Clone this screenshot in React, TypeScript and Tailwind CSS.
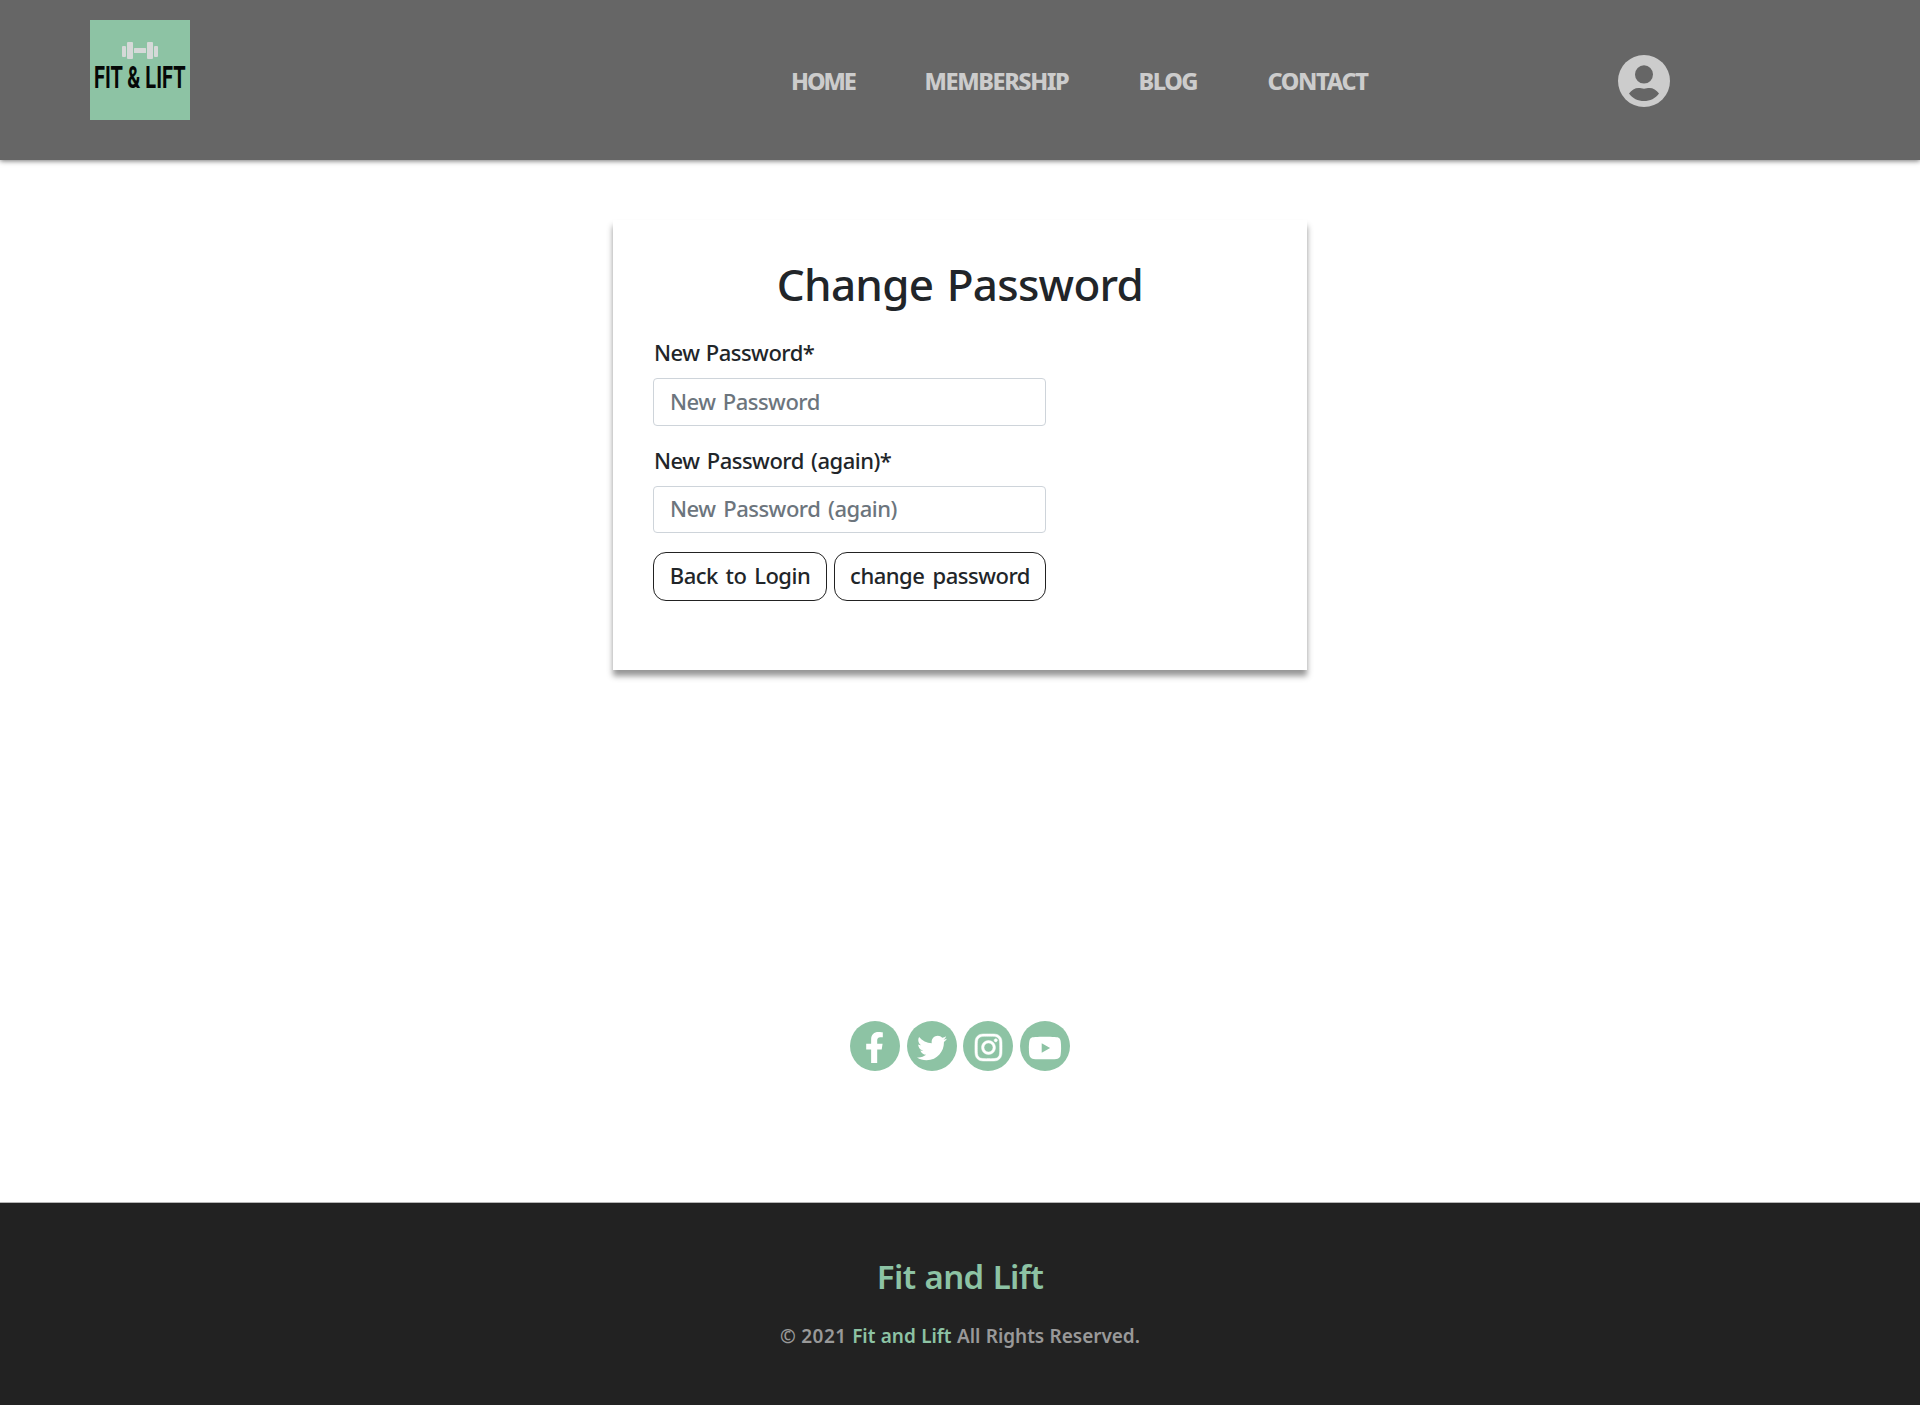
import React from "react";
import { FaFacebookF, FaTwitter, FaInstagram, FaYoutube } from "react-icons/fa";

function Logo() {
  return (
    <svg className="block h-[100px] w-[100px] overflow-visible bg-[#8dc3a4]" viewBox="0 0 100 100" role="img" aria-label="Fit & Lift">
      <g fill="#d6d9d8">
        <rect x="32" y="26" width="4" height="11" rx="1" />
        <rect x="37" y="22" width="6" height="17" rx="1" />
        <rect x="44" y="28" width="12" height="5" rx="0.5" />
        <rect x="57" y="22" width="6" height="17" rx="1" />
        <rect x="64" y="26" width="4" height="11" rx="1" />
      </g>
      <text
        x="4"
        y="68.4"
        textLength="91.5"
        lengthAdjust="spacingAndGlyphs"
        fontFamily="Roboto, sans-serif"
        fontWeight="700"
        fontSize="32"
        fill="#050807"
      >
        FIT &amp; LIFT
      </text>
    </svg>
  );
}

function UserIcon() {
  return (
    <svg className="block h-[52px] w-[52px]" viewBox="0 0 52 52">
      <circle cx="26" cy="26" r="26" fill="#ccc" />
      <ellipse cx="26" cy="19.4" rx="9" ry="9.2" fill="#666" />
      <path d="M11 38.5C13.5 35 17 33 20.5 33C22.500 33 24 33.700 26 33.700C28 33.700 29.500 33 31.500 33C35 33 38.500 35 41 38.500C37.500 43.500 32 46 26 46C20 46 14.500 43.500 11 38.500Z" fill="#666" />
    </svg>
  );
}

const socials = [
  { Icon: FaFacebookF, size: 31, stroke: 0 },
  { Icon: FaTwitter, size: 30, stroke: 0 },
  { Icon: FaInstagram, size: 31, stroke: 8 },
  { Icon: FaYoutube, size: 34, stroke: 0 },
];

export default function App() {
  return (
    <div className="flex h-[1405px] w-[1920px] flex-col overflow-hidden bg-white font-['Noto_Sans',sans-serif] font-medium text-[#212529]">
      <header className="flex h-[160px] shrink-0 items-start bg-[#666] pl-[90px] shadow-[0_1px_5px_rgba(0,0,0,0.55)]">
        <div className="mt-5 w-[701px]">
          <Logo />
        </div>
        <nav className="mt-[65px] flex w-[827px] text-[23.500px] leading-[32px] font-extrabold whitespace-nowrap text-[#ccc]">
          <a className="w-[133.500px] tracking-[-2.100px]">HOME</a>
          <a className="w-[214px] tracking-[-1.400px]">MEMBERSHIP</a>
          <a className="w-[129px] tracking-[-1.500px]">BLOG</a>
          <a className="tracking-[-1.400px]">CONTACT</a>
        </nav>
        <div className="mt-[55px]">
          <UserIcon />
        </div>
      </header>

      <main className="flex h-[1042px] shrink-0 flex-col items-center">
        <section className="mt-[60px] h-[450px] w-[694px] bg-white px-10 pt-[34px] shadow-[0_6px_6px_rgba(0,0,0,0.42)]">
          <h1 className="text-center text-[44px] leading-[60px] font-medium tracking-[-0.700px] whitespace-nowrap [word-spacing:2.500px]">Change Password</h1>
          <form className="w-[393px] text-[22px] leading-[30px] tracking-[-0.500px] whitespace-nowrap">
            <label className="mt-[23px] block pl-px [word-spacing:1px]">New Password*</label>
            <input className="mt-[11px] block h-[48px] w-full rounded-[4px] border border-[#ced4da] px-4 pb-[3px] [word-spacing:2px] placeholder:text-[#6c757d] placeholder:opacity-100" placeholder="New Password" />
            <label className="mt-[19px] block pl-px [word-spacing:2px]">New Password (again)*</label>
            <input className="mt-[11px] block h-[47px] w-full rounded-[4px] border border-[#ced4da] px-4 pb-[3px] [word-spacing:2.500px] placeholder:text-[#6c757d] placeholder:opacity-100" placeholder="New Password (again)" />
            <div className="mt-[19px] flex justify-between">
              <button type="button" className="h-[49px] w-[174px] rounded-[13px] border border-[#222] pb-[3px] tracking-[-0.500px] [word-spacing:2.500px]">Back to Login</button>
              <button type="button" className="h-[49px] w-[212px] rounded-[13px] border border-[#222] pb-[3px] tracking-[-0.500px] [word-spacing:3px]">change password</button>
            </div>
          </form>
        </section>
        <div className="mt-[351px] flex gap-[6.700px]">
          {socials.map(({ Icon, size, stroke }, i) => (
            <a key={i} className="flex h-[50px] w-[50px] items-center justify-center rounded-full bg-[#8dc3a4] pt-[3px] text-white">
              <Icon size={size} strokeWidth={stroke} />
            </a>
          ))}
        </div>
      </main>

      <footer className="flex grow flex-col items-center border-t border-[#b5b5b5] bg-[#222] whitespace-nowrap">
        <h2 className="mt-[52px] text-[33px] leading-[44px] font-semibold tracking-[-0.600px] text-[#8dc3a4] [word-spacing:1px]">Fit and Lift</h2>
        <p className="mt-[23px] text-[19px] leading-[28px] font-semibold tracking-[-0.040px] text-[#999] [word-spacing:0.500px]">
          © <span className="tracking-[0.500px]">2021</span> <span className="text-[#8dc3a4]">Fit and Lift</span> All Rights Reserved.
        </p>
      </footer>
    </div>
  );
}
